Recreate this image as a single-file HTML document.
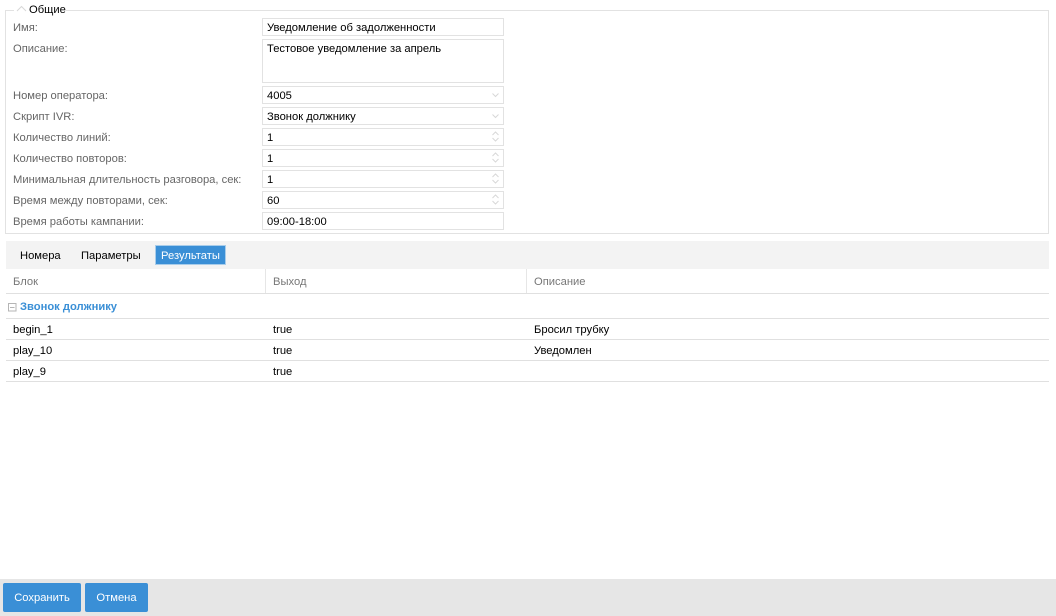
<!DOCTYPE html>
<html><head><meta charset="utf-8">
<style>
html,body{margin:0;padding:0;background:#fff}
body{width:1056px;height:616px;position:relative;overflow:hidden;font:11.2px/15px "Liberation Sans",sans-serif;color:#000}
#w{position:absolute;left:0;top:0;width:1056px;height:616px;overflow:hidden;background:#fff;filter:blur(.35px)}
.a{position:absolute;white-space:nowrap}
.l{position:absolute;left:13px;color:#666;white-space:nowrap}
.i{position:absolute;left:262px;width:240px;height:16px;border:1px solid #e2e2e2;box-sizing:content-box;padding:0}
.i span{position:absolute;left:4px;top:1px;line-height:17px;white-space:nowrap}
.i svg{position:absolute;left:227.5px;top:0}
.h{position:absolute;background:#e0e0e0}
.th{position:absolute;top:275px;color:#777;white-space:nowrap}
.td{position:absolute;white-space:nowrap}
.btn{position:absolute;top:583px;height:29px;background:#3a8fd6;border-radius:2px;color:#fff;text-align:center;line-height:29px}
.btn span{position:relative;top:1px}
</style></head><body><div id="w">
<div class="a" style="left:5px;top:10px;width:1042px;height:222px;border:1px solid #e2e2e2"></div>
<div class="a" style="left:14px;top:2px;width:52px;height:15px;background:#fff"></div>
<svg class="a" style="left:16px;top:5px" width="11" height="7"><path d="M1 6L5.5 1.5L10 6" fill="none" stroke="#d8d8d8"/></svg>
<div class="a" style="left:29px;top:3px">Общие</div>

<div class="l" style="top:21px">Имя:</div>
<div class="l" style="top:42px">Описание:</div>
<div class="l" style="top:89px">Номер оператора:</div>
<div class="l" style="top:110px">Скрипт IVR:</div>
<div class="l" style="top:131px">Количество линий:</div>
<div class="l" style="top:152px">Количество повторов:</div>
<div class="l" style="top:173px">Минимальная длительность разговора, сек:</div>
<div class="l" style="top:194px">Время между повторами, сек:</div>
<div class="l" style="top:215px">Время работы кампании:</div>

<div class="i" style="top:18px"><span>Уведомление об задолженности</span></div>
<div class="i" style="top:39px;height:42px"><span>Тестовое уведомление за апрель</span></div>
<div class="i" style="top:86px"><span>4005</span><svg width="10" height="16"><path d="M1.5 6.5L4.5 9.5L7.5 6.5" fill="none" stroke="#d8d8d8"/></svg></div>
<div class="i" style="top:107px"><span>Звонок должнику</span><svg width="10" height="16"><path d="M1.5 6.5L4.5 9.5L7.5 6.5" fill="none" stroke="#d8d8d8"/></svg></div>
<div class="i" style="top:128px"><span>1</span><svg width="10" height="16"><path d="M1.5 6L4.5 3L7.5 6M1.5 9L4.5 12L7.5 9" fill="none" stroke="#d8d8d8"/></svg></div>
<div class="i" style="top:149px"><span>1</span><svg width="10" height="16"><path d="M1.5 6L4.5 3L7.5 6M1.5 9L4.5 12L7.5 9" fill="none" stroke="#d8d8d8"/></svg></div>
<div class="i" style="top:170px"><span>1</span><svg width="10" height="16"><path d="M1.5 6L4.5 3L7.5 6M1.5 9L4.5 12L7.5 9" fill="none" stroke="#d8d8d8"/></svg></div>
<div class="i" style="top:191px"><span>60</span><svg width="10" height="16"><path d="M1.5 6L4.5 3L7.5 6M1.5 9L4.5 12L7.5 9" fill="none" stroke="#d8d8d8"/></svg></div>
<div class="i" style="top:212px"><span>09:00-18:00</span></div>

<div class="a" style="left:6px;top:241px;width:1043px;height:28px;background:#f3f3f3"></div>
<div class="a" style="left:20px;top:249px">Номера</div>
<div class="a" style="left:81px;top:249px">Параметры</div>
<div class="a" style="left:155px;top:245px;width:69px;height:18px;background:#3a8fd6;border:1px solid #a9cdea;color:#fff;text-align:center;line-height:20px">Результаты</div>

<div class="h" style="left:265px;top:269px;width:1px;height:24px;background:#e6e6e6"></div>
<div class="h" style="left:526px;top:269px;width:1px;height:24px;background:#e6e6e6"></div>
<div class="th" style="left:13px">Блок</div>
<div class="th" style="left:273px">Выход</div>
<div class="th" style="left:534px">Описание</div>
<div class="h" style="left:6px;top:293px;width:1043px;height:1px"></div>

<svg class="a" style="left:8px;top:303px" width="9" height="9"><path d="M.5.5H8V8H.5ZM2 4.5H6.5" fill="none" stroke="#b5b5b5"/></svg>
<div class="a" style="left:20px;top:300px;color:#3a8fd6;font-weight:bold">Звонок должнику</div>
<div class="h" style="left:6px;top:318px;width:1043px;height:1px"></div>
<div class="td" style="left:13px;top:323px">begin_1</div><div class="td" style="left:273px;top:323px">true</div><div class="td" style="left:534px;top:323px">Бросил трубку</div>
<div class="h" style="left:6px;top:339px;width:1043px;height:1px"></div>
<div class="td" style="left:13px;top:344px">play_10</div><div class="td" style="left:273px;top:344px">true</div><div class="td" style="left:534px;top:344px">Уведомлен</div>
<div class="h" style="left:6px;top:360px;width:1043px;height:1px"></div>
<div class="td" style="left:13px;top:365px">play_9</div><div class="td" style="left:273px;top:365px">true</div>
<div class="h" style="left:6px;top:381px;width:1043px;height:1px"></div>

<div class="a" style="left:0;top:579px;width:1056px;height:37px;background:#e6e6e6"></div>
<div class="btn" style="left:3px;width:78px"><span>Сохранить</span></div>
<div class="btn" style="left:85px;width:63px"><span>Отмена</span></div>
</div></body></html>
